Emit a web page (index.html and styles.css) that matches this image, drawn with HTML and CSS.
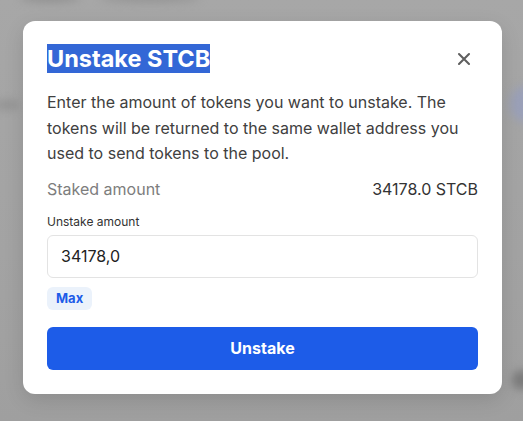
FILE: index.html
```html
<!DOCTYPE html>
<html lang="en">
<head>
<meta charset="utf-8">
<title>Unstake STCB</title>
<link rel="stylesheet" href="styles.css">
</head>
<body>
<div class="backdrop">
  <div class="blur blur-top1"></div>
  <div class="blur blur-top2"></div>
  <div class="blur blur-left"></div>
  <div class="blur blur-right"></div>
  <div class="blur blur-br"></div>
  <div class="modal">
    <div class="modal-head">
      <h2 class="title"><span class="selected">Unstake STCB</span></h2>
      <button class="close" aria-label="Close">
        <svg width="14" height="14" viewBox="0 0 14 14"><path d="M2 2 L12 12 M12 2 L2 12" stroke="#5f5f5f" stroke-width="2.1" stroke-linecap="round"/></svg>
      </button>
    </div>
    <p class="desc">Enter the amount of tokens you want to unstake. The tokens will be returned to the same wallet address you used to send tokens to the pool.</p>
    <div class="row">
      <span class="row-label">Staked amount</span>
      <span class="row-value">34178.0 STCB</span>
    </div>
    <label class="field-label">Unstake amount</label>
    <div class="input">34178,0</div>
    <div class="badge-row"><span class="badge">Max</span></div>
    <button class="primary">Unstake</button>
  </div>
</div>
</body>
</html>
```
FILE: styles.css
```css
* { box-sizing: border-box; }
html, body { margin: 0; padding: 0; }
body {
  width: 523px;
  height: 421px;
  overflow: hidden;
  background: #a5a5a5;
  font-family: Inter, "Noto Sans", sans-serif;
}
.backdrop {
  position: relative;
  width: 523px;
  height: 421px;
  padding: 21px 21px 0 23px;
  background: linear-gradient(180deg, #a7a7a7 0%, #a3a3a3 60%, #9f9f9f 100%);
}
.blur {
  position: absolute;
  filter: blur(4px);
  border-radius: 50%;
}
.blur-top1 { left: 20px; top: -6px; width: 60px; height: 8px; background: #8f8f8f; }
.blur-top2 { left: 100px; top: -6px; width: 100px; height: 8px; background: #939393; }
.blur-left { left: -6px; top: 100px; width: 26px; height: 10px; background: #939393; }
.blur-right { left: 510px; top: 86px; width: 30px; height: 36px; background: #9aa0b8; }
.blur-br { left: 512px; top: 370px; width: 20px; height: 20px; background: #7a7a7a; }
.modal {
  position: relative;
  width: 479px;
  background: #fff;
  border-radius: 12px;
  padding: 23px 24px 24px;
  box-shadow: 0 6px 20px rgba(0,0,0,0.12);
}
.modal-head {
  display: flex;
  justify-content: space-between;
  align-items: center;
}
.title {
  margin: 0;
  font-size: 23.5px;
  line-height: 29px;
  font-weight: 700;
  color: #111;
}
.selected {
  background: #3367d6;
  color: #fff;
  display: inline-block;
}
.close {
  border: 0;
  background: none;
  padding: 0;
  width: 14px;
  height: 14px;
  margin-right: 7px;
  display: flex;
}
.desc {
  margin: 17px 0 0;
  font-size: 16px;
  line-height: 25.5px;
  color: #404040;
}
.row {
  display: flex;
  justify-content: space-between;
  margin-top: 12px;
  font-size: 16px;
  line-height: 20px;
}
.row-label { color: #7d7d7d; }
.row-value { color: #333; }
.field-label {
  display: block;
  margin-top: 15px;
  font-size: 12px;
  line-height: 16px;
  color: #333;
}
.input {
  margin-top: 5px;
  height: 43px;
  border: 1px solid #e3e3e3;
  border-radius: 6px;
  padding: 0 13px;
  display: flex;
  align-items: center;
  font-size: 16px;
  color: #222;
}
.badge-row { margin-top: 9px; display: flex; }
.badge {
  background: #ebf2fb;
  color: #1d5ce8;
  font-weight: 700;
  font-size: 13px;
  line-height: 23px;
  padding: 0 9px;
  border-radius: 6px;
}
.primary {
  display: block;
  width: 100%;
  margin-top: 17px;
  height: 43px;
  border: 0;
  border-radius: 6px;
  background: #1d5ce8;
  color: #fff;
  font-family: inherit;
  font-size: 16px;
  font-weight: 700;
}
```
